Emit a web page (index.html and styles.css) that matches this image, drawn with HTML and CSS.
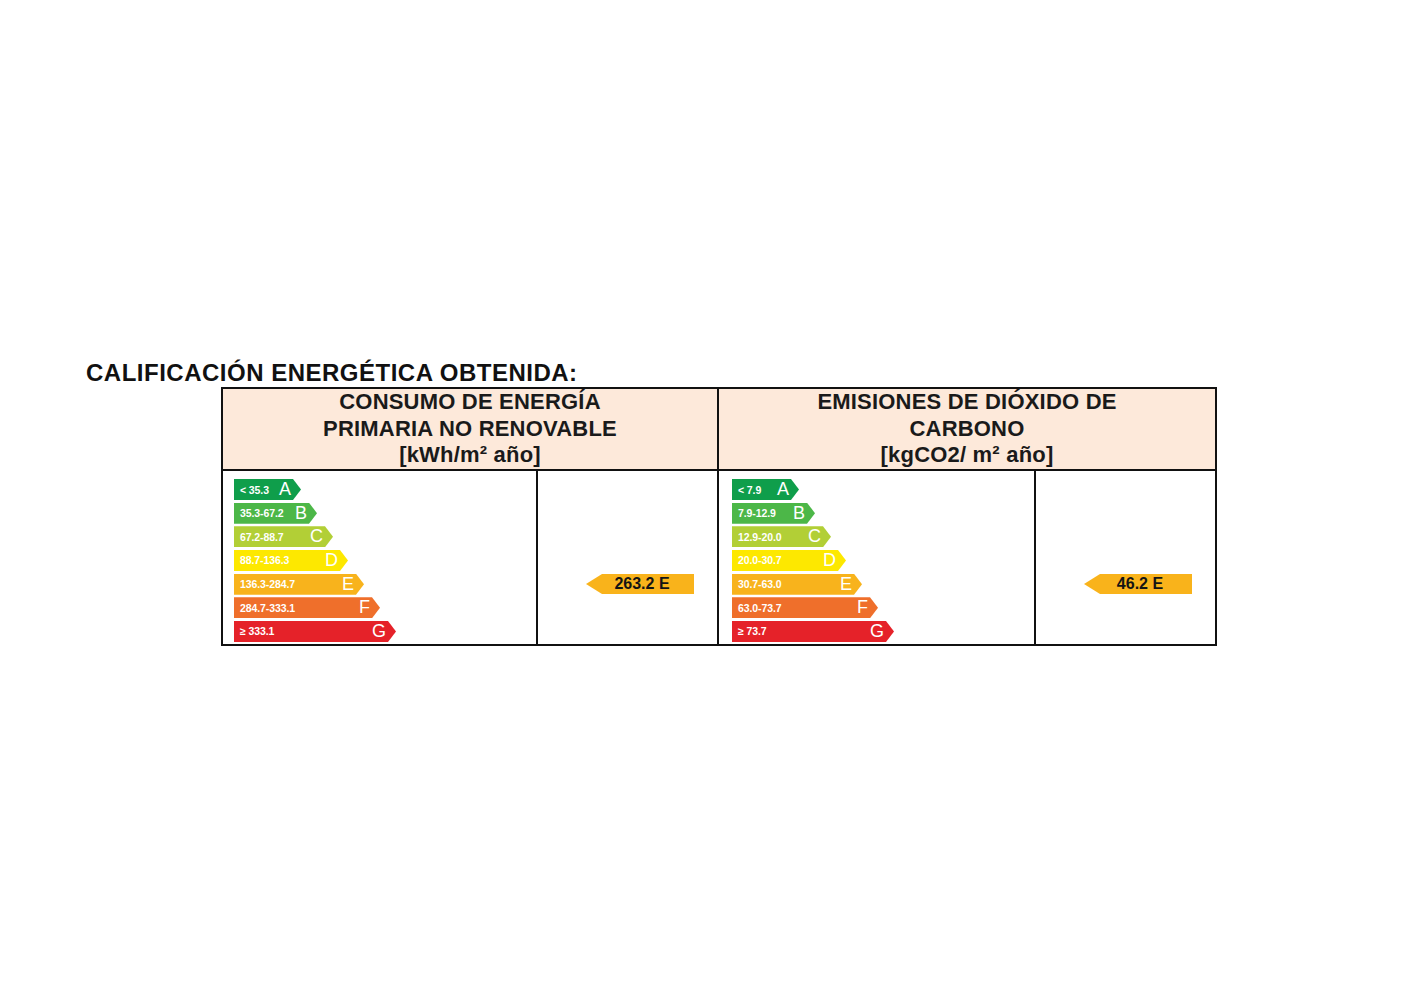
FILE: index.html
```html
<!DOCTYPE html>
<html lang="es">
<head>
<meta charset="utf-8">
<title>Calificación energética</title>
<link rel="stylesheet" href="styles.css">
</head>
<body>
<div class="page">
  <h1 class="title">CALIFICACIÓN ENERGÉTICA OBTENIDA:</h1>
  <div class="table">
    <div class="head">CONSUMO DE ENERGÍA<br>PRIMARIA NO RENOVABLE<br>[kWh/m² año]</div>
    <div class="head">EMISIONES DE DIÓXIDO DE<br>CARBONO<br>[kgCO2/ m² año]</div>

    <div class="scale">
      <div class="bar a"><span class="rng">&lt; 35.3</span><span class="ltr">A</span></div>
      <div class="bar b"><span class="rng">35.3-67.2</span><span class="ltr">B</span></div>
      <div class="bar c"><span class="rng">67.2-88.7</span><span class="ltr">C</span></div>
      <div class="bar d"><span class="rng">88.7-136.3</span><span class="ltr">D</span></div>
      <div class="bar e"><span class="rng">136.3-284.7</span><span class="ltr">E</span></div>
      <div class="bar f"><span class="rng">284.7-333.1</span><span class="ltr">F</span></div>
      <div class="bar g"><span class="rng">≥ 333.1</span><span class="ltr">G</span></div>
    </div>
    <div class="result"><div class="pointer">263.2 E</div></div>

    <div class="scale scale-right">
      <div class="bar a"><span class="rng">&lt; 7.9</span><span class="ltr">A</span></div>
      <div class="bar b"><span class="rng">7.9-12.9</span><span class="ltr">B</span></div>
      <div class="bar c"><span class="rng">12.9-20.0</span><span class="ltr">C</span></div>
      <div class="bar d"><span class="rng">20.0-30.7</span><span class="ltr">D</span></div>
      <div class="bar e"><span class="rng">30.7-63.0</span><span class="ltr">E</span></div>
      <div class="bar f"><span class="rng">63.0-73.7</span><span class="ltr">F</span></div>
      <div class="bar g"><span class="rng">≥ 73.7</span><span class="ltr">G</span></div>
    </div>
    <div class="result"><div class="pointer">46.2 E</div></div>
  </div>
</div>
</body>
</html>
```

FILE: styles.css
```css
html, body {
  margin: 0;
  padding: 0;
  background: #ffffff;
}

body {
  font-family: "Liberation Sans", Arial, sans-serif;
  color: #111111;
}

.page {
  padding-top: 360px;
}

.title {
  margin: 0 0 1px 86px;
  font-size: 24px;
  line-height: 26px;
  font-weight: bold;
  letter-spacing: 0.5px;
  color: #111111;
}

.table {
  margin-left: 221px;
  display: grid;
  grid-template-columns: 313px 179px 315px 179px;
  grid-template-rows: 80px 173px;
  gap: 2px;
  padding: 2px;
  background: #111111;
  width: max-content;
}

.head {
  grid-column: span 2;
  background: #fde9da;
  text-align: center;
  font-size: 22px;
  line-height: 26.5px;
  font-weight: bold;
  letter-spacing: 0.2px;
  color: #1a1a1a;
}

.scale {
  background: #ffffff;
  padding: 8px 0 0 11px;
  display: flex;
  flex-direction: column;
  gap: 2.67px;
}

.scale-right {
  padding-left: 13px;
}

.bar {
  height: 21px;
  display: flex;
  align-items: center;
  justify-content: space-between;
  padding: 0 10px 0 6px;
  box-sizing: border-box;
  clip-path: polygon(0 0, calc(100% - 8px) 0, 100% 50%, calc(100% - 8px) 100%, 0 100%);
  color: #ffffff;
}

.rng {
  font-size: 10.5px;
  font-weight: bold;
  letter-spacing: -0.1px;
}

.ltr {
  font-size: 18px;
  line-height: 21px;
}

.a { width: 67px; background: #0f9e4b; }
.b { width: 83px; background: #4cb748; }
.c { width: 99px; background: #b2cf36; }
.d { width: 114px; background: #fde800; }
.e { width: 130px; background: #f8b31c; }
.f { width: 146px; background: #ef6f2b; }
.g { width: 162px; background: #e52229; }

.result {
  background: #ffffff;
  display: flex;
  justify-content: flex-end;
  align-items: flex-start;
  padding: 103px 23px 0 0;
}

.pointer {
  width: 108px;
  height: 20px;
  background: #f9b31b;
  clip-path: polygon(16px 0, 100% 0, 100% 100%, 16px 100%, 0 50%);
  font-size: 16px;
  font-weight: bold;
  line-height: 20px;
  text-align: center;
  color: #141414;
  padding-left: 4px;
  box-sizing: border-box;
}
```
